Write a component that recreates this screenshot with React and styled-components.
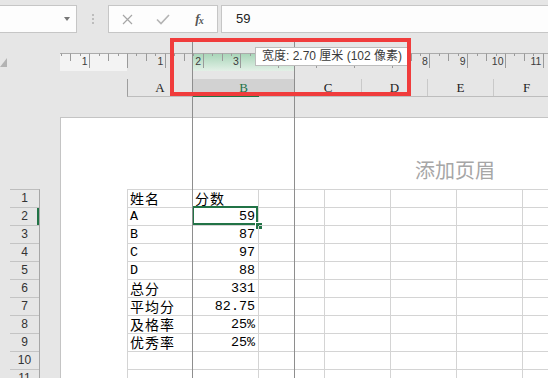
import React from "react"
import styled, { createGlobalStyle } from "styled-components"

const Global = createGlobalStyle`
    html, body {
        margin: 0;
        padding: 0;
        background: #e6e6e6;
    }
    * {
        box-sizing: border-box;
    }
`

const GREEN = "#217346"
const GRID = "#d4d4d4"

const Root = styled.div`
    position: relative;
    width: 548px;
    height: 378px;
    overflow: hidden;
    background: #e6e6e6;
    font-family: "Liberation Sans", "Noto Sans CJK SC", sans-serif;
    color: #222;
`

// formula bar
const FormulaBar = styled.div`
    display: flex;
    align-items: flex-start;
    height: 37px;
    padding-top: 5px;
`

const NameBox = styled.div`
    width: 78px;
    height: 28px;
    margin-left: -1px;
    background: #fdfdfd;
    border: 1px solid #c6c6c6;
    display: flex;
    align-items: center;
    justify-content: flex-end;
    padding-right: 6px;
`

const DropArrow = styled.div`
    width: 0;
    height: 0;
    border-left: 3.5px solid transparent;
    border-right: 3.5px solid transparent;
    border-top: 4px solid #777;
`

const Grip = styled.div`
    width: 2px;
    margin: 9px 14px 0 15px;
    display: flex;
    flex-direction: column;
    gap: 2px;

    & > span {
        width: 2px;
        height: 2px;
        background: #bdbdbd;
    }
`

const FxButtons = styled.div`
    display: flex;
    width: 110px;
    height: 28px;
    background: #fdfdfd;
    border: 1px solid #c6c6c6;
`

const FxSlot = styled.div`
    width: 36px;
    display: flex;
    align-items: center;
    justify-content: center;
`

const FxLabel = styled.span`
    font-family: "Liberation Serif", serif;
    font-style: italic;
    font-weight: bold;
    font-size: 13px;
    color: #555;
    letter-spacing: -1px;

    & sub {
        font-size: 10px;
        vertical-align: -1px;
    }
`

const FormulaInput = styled.div`
    flex: 1;
    height: 28px;
    margin-left: 3px;
    margin-right: -2px;
    background: #fdfdfd;
    border: 1px solid #c6c6c6;
    padding-left: 14px;
    font-size: 13px;
    line-height: 25px;
    color: #222;
`

// ruler
const RulerRow = styled.div`
    display: flex;
    height: 42px;
    padding-top: 16px;
`

const Corner = styled.div`
    width: 60px;
    padding-top: 5px;
`

// column headers
const HeaderRow = styled.div`
    display: flex;
    height: 18px;
    margin-left: 127px;
    margin-bottom: 20px;
    border-left: 1px solid #9e9e9e;
    border-bottom: 1px solid #bdbdbd;
`

const ColHead = styled.div`
    position: relative;
    flex: none;
    width: ${p => p.$w}px;
    border-right: 1px solid #c9c9c9;
    background: ${p => (p.$active ? "#d2d2d2" : "transparent")};
    color: ${p => (p.$active ? GREEN : "#222")};
    font-family: "Liberation Serif", serif;
    font-size: 13px;
    line-height: 17px;
    text-align: center;

    ${p =>
        p.$active &&
        `
    &::after {
        content: "";
        position: absolute;
        left: 0;
        bottom: -1px;
        width: 66px;
        height: 2px;
        background: ${GREEN};
    }
    `}
`

// body
const Body = styled.div`
    display: flex;
`

const LeftStrip = styled.div`
    width: 10px;
    flex: none;
`

const RowHeads = styled.div`
    width: 30px;
    flex: none;
    padding-top: 72px;
`

const RowHeadList = styled.div`
    border-top: 1px solid #bdbdbd;
    border-right: 1px solid #a6a6a6;
`

const RowHead = styled.div`
    height: 18px;
    border-bottom: 1px solid #c4c4c4;
    font-size: 12px;
    line-height: 17px;
    text-align: center;
    color: #333;
    box-shadow: ${p => (p.$active ? `inset -2px 0 ${GREEN}` : "none")};
`

const Page = styled.div`
    flex: 1;
    margin-left: 20px;
    height: 300px;
    background: #fff;
    border-top: 1px solid #c4c4c4;
    border-left: 1px solid #c4c4c4;
    overflow: hidden;
`

const PageHeader = styled.div`
    height: 71px;
    display: flex;
    align-items: flex-end;
    padding-left: 354px;
    padding-bottom: 9px;
    font-family: "Noto Sans CJK SC", sans-serif;
    font-size: 20px;
    line-height: 20px;
    color: #a6a6a6;
    white-space: nowrap;
`

const Grid = styled.div`
    display: grid;
    grid-template-columns: 65px repeat(6, 66px);
    grid-auto-rows: 18px;
    margin-left: 66px;
    width: max-content;
    border-top: 1px solid ${GRID};
    border-left: 1px solid ${GRID};
`

const Cell = styled.div`
    position: relative;
    border-right: 1px solid ${GRID};
    border-bottom: 1px solid ${GRID};
    padding: 0 3px 0 2px;
    text-align: ${p => (p.$num ? "right" : "left")};
    font-family: ${p =>
        p.$cjk
            ? `"Noto Sans CJK SC", sans-serif`
            : `"Liberation Mono", "Noto Sans CJK SC", monospace`};
    font-size: ${p => (p.$cjk ? "14px" : "13.4px")};
    letter-spacing: ${p => (p.$cjk ? "1px" : "0")};
    line-height: 17px;
    color: #000;
    white-space: nowrap;
    overflow: visible;

    ${p =>
        p.$selected &&
        `
    &::before {
        content: "";
        position: absolute;
        top: -2px;
        left: -1px;
        right: 0;
        bottom: 0;
        border: 2px solid ${GREEN};
    }
    &::after {
        content: "";
        position: absolute;
        left: 62px;
        top: 14px;
        width: 6px;
        height: 6px;
        background: ${GREEN};
        border: 1px solid #fff;
    }
    `}
`

// overlays
const DragLine = styled.div`
    position: absolute;
    top: 41px;
    bottom: 0;
    left: ${p => p.$x}px;
    width: 1px;
    background: #8e8e8e;
`

const Tooltip = styled.div`
    position: absolute;
    left: 255px;
    top: 47px;
    width: 153px;
    height: 19px;
    background: #fff;
    border: 1px solid #bcbcbc;
    padding-left: 6px;
    font-family: "Liberation Sans", "Noto Sans CJK SC", sans-serif;
    font-size: 12px;
    line-height: 17px;
    color: #3a3a3a;
    white-space: nowrap;
`

const RedBox = styled.div`
    position: absolute;
    left: 170px;
    top: 38px;
    width: 241px;
    height: 58px;
    border: 4px solid #f03c3c;
`

const PX_CM = 37.8
const ORIGIN = 67 // x=127 in page coords, ruler starts at 60

function Ruler() {
    const ticks = []
    for (let q = -7; q <= 48; q++) {
        const x = Math.round(ORIGIN + (PX_CM * q) / 4) + 0.5
        const len = q % 4 === 0 ? 15 : q % 2 === 0 ? 8 : 3
        ticks.push(<line key={q} x1={x} x2={x} y1={0.5} y2={len} stroke="#9a9a9a" strokeWidth="1" />)
    }
    // labels 4..7 sit under the tooltip
    const labels = [[-1, "1"], [1, "1"], [2, "2"], [3, "3"], [8, "8"], [9, "9"], [10, "10"], [11, "11"]]
    return (
        <svg width="488" height="18" style={{ display: "block" }}>
            <defs>
                <linearGradient id="sel" x1="0" y1="0" x2="0" y2="1">
                    <stop offset="0" stopColor="#a9d6b9" />
                    <stop offset="1" stopColor="#e3f0e7" />
                </linearGradient>
            </defs>
            <rect x="0" y="0" width="67" height="18" fill="#f3f3f3" />
            <rect x="132" y="1" width="102" height="17" fill="url(#sel)" />
            <line x1="0" x2="488" y1="0.5" y2="0.5" stroke="#ababab" />
            {ticks}
            {labels.map(([n, t]) => (
                <text
                    key={n}
                    x={ORIGIN + PX_CM * n - 1.5}
                    y="11.5"
                    textAnchor="end"
                    fontFamily="Liberation Sans, sans-serif"
                    fontSize="10.5"
                    fill="#3c3c3c"
                >
                    {t}
                </text>
            ))}
        </svg>
    )
}

const cols = [
    { name: "A", w: 65 },
    { name: "B", w: 102, active: true },
    { name: "C", w: 67 },
    { name: "D", w: 66 },
    { name: "E", w: 66 },
    { name: "F", w: 66 }
]

const data = [
    ["姓名", "分数"],
    ["A", "59"],
    ["B", "87"],
    ["C", "97"],
    ["D", "88"],
    ["总分", "331"],
    ["平均分", "82.75"],
    ["及格率", "25%"],
    ["优秀率", "25%"],
    [],
    []
]

const isCjk = s => /[\u4e00-\u9fff]/.test(s || "")

export default function App() {
    return (
        <Root>
            <Global />
            <FormulaBar>
                <NameBox>
                    <DropArrow />
                </NameBox>
                <Grip>
                    <span />
                    <span />
                    <span />
                </Grip>
                <FxButtons>
                    <FxSlot>
                        <svg width="11" height="11" viewBox="0 0 11 11">
                            <path d="M1 1 L10 10 M10 1 L1 10" stroke="#a6a6a6" strokeWidth="1.2" fill="none" />
                        </svg>
                    </FxSlot>
                    <FxSlot>
                        <svg width="14" height="11" viewBox="0 0 14 11">
                            <path d="M1 5.5 L5 9.5 L13 1" stroke="#b4b4b4" strokeWidth="1.6" fill="none" />
                        </svg>
                    </FxSlot>
                    <FxSlot>
                        <FxLabel>
                            f<sub>x</sub>
                        </FxLabel>
                    </FxSlot>
                </FxButtons>
                <FormulaInput>59</FormulaInput>
            </FormulaBar>

            <RulerRow>
                <Corner>
                    <svg width="7" height="9" style={{ display: "block" }}>
                        <polygon points="7,0 7,9 0,9" fill="#b3b3b3" />
                    </svg>
                </Corner>
                <Ruler />
            </RulerRow>

            <HeaderRow>
                {cols.map(c => (
                    <ColHead key={c.name} $w={c.w} $active={c.active}>
                        {c.name}
                    </ColHead>
                ))}
            </HeaderRow>

            <Body>
                <LeftStrip />
                <RowHeads>
                    <RowHeadList>
                        {data.map((_, i) => (
                            <RowHead key={i} $active={i === 1}>
                                {i + 1}
                            </RowHead>
                        ))}
                    </RowHeadList>
                </RowHeads>
                <Page>
                    <PageHeader>添加页眉</PageHeader>
                    <Grid>
                        {data.map((row, r) =>
                            [0, 1, 2, 3, 4, 5, 6].map(c => {
                                const v = row[c]
                                const num = v && !isCjk(v) && /^[\d.%]+$/.test(v)
                                return (
                                    <Cell
                                        key={r + "-" + c}
                                        $num={num}
                                        $cjk={isCjk(v)}
                                        $selected={r === 1 && c === 1}
                                    >
                                        {v}
                                    </Cell>
                                )
                            })
                        )}
                    </Grid>
                </Page>
            </Body>

            <DragLine $x={192} />
            <DragLine $x={294} />
            <Tooltip>宽度: 2.70 厘米 (102 像素)</Tooltip>
            <RedBox />
        </Root>
    )
}
